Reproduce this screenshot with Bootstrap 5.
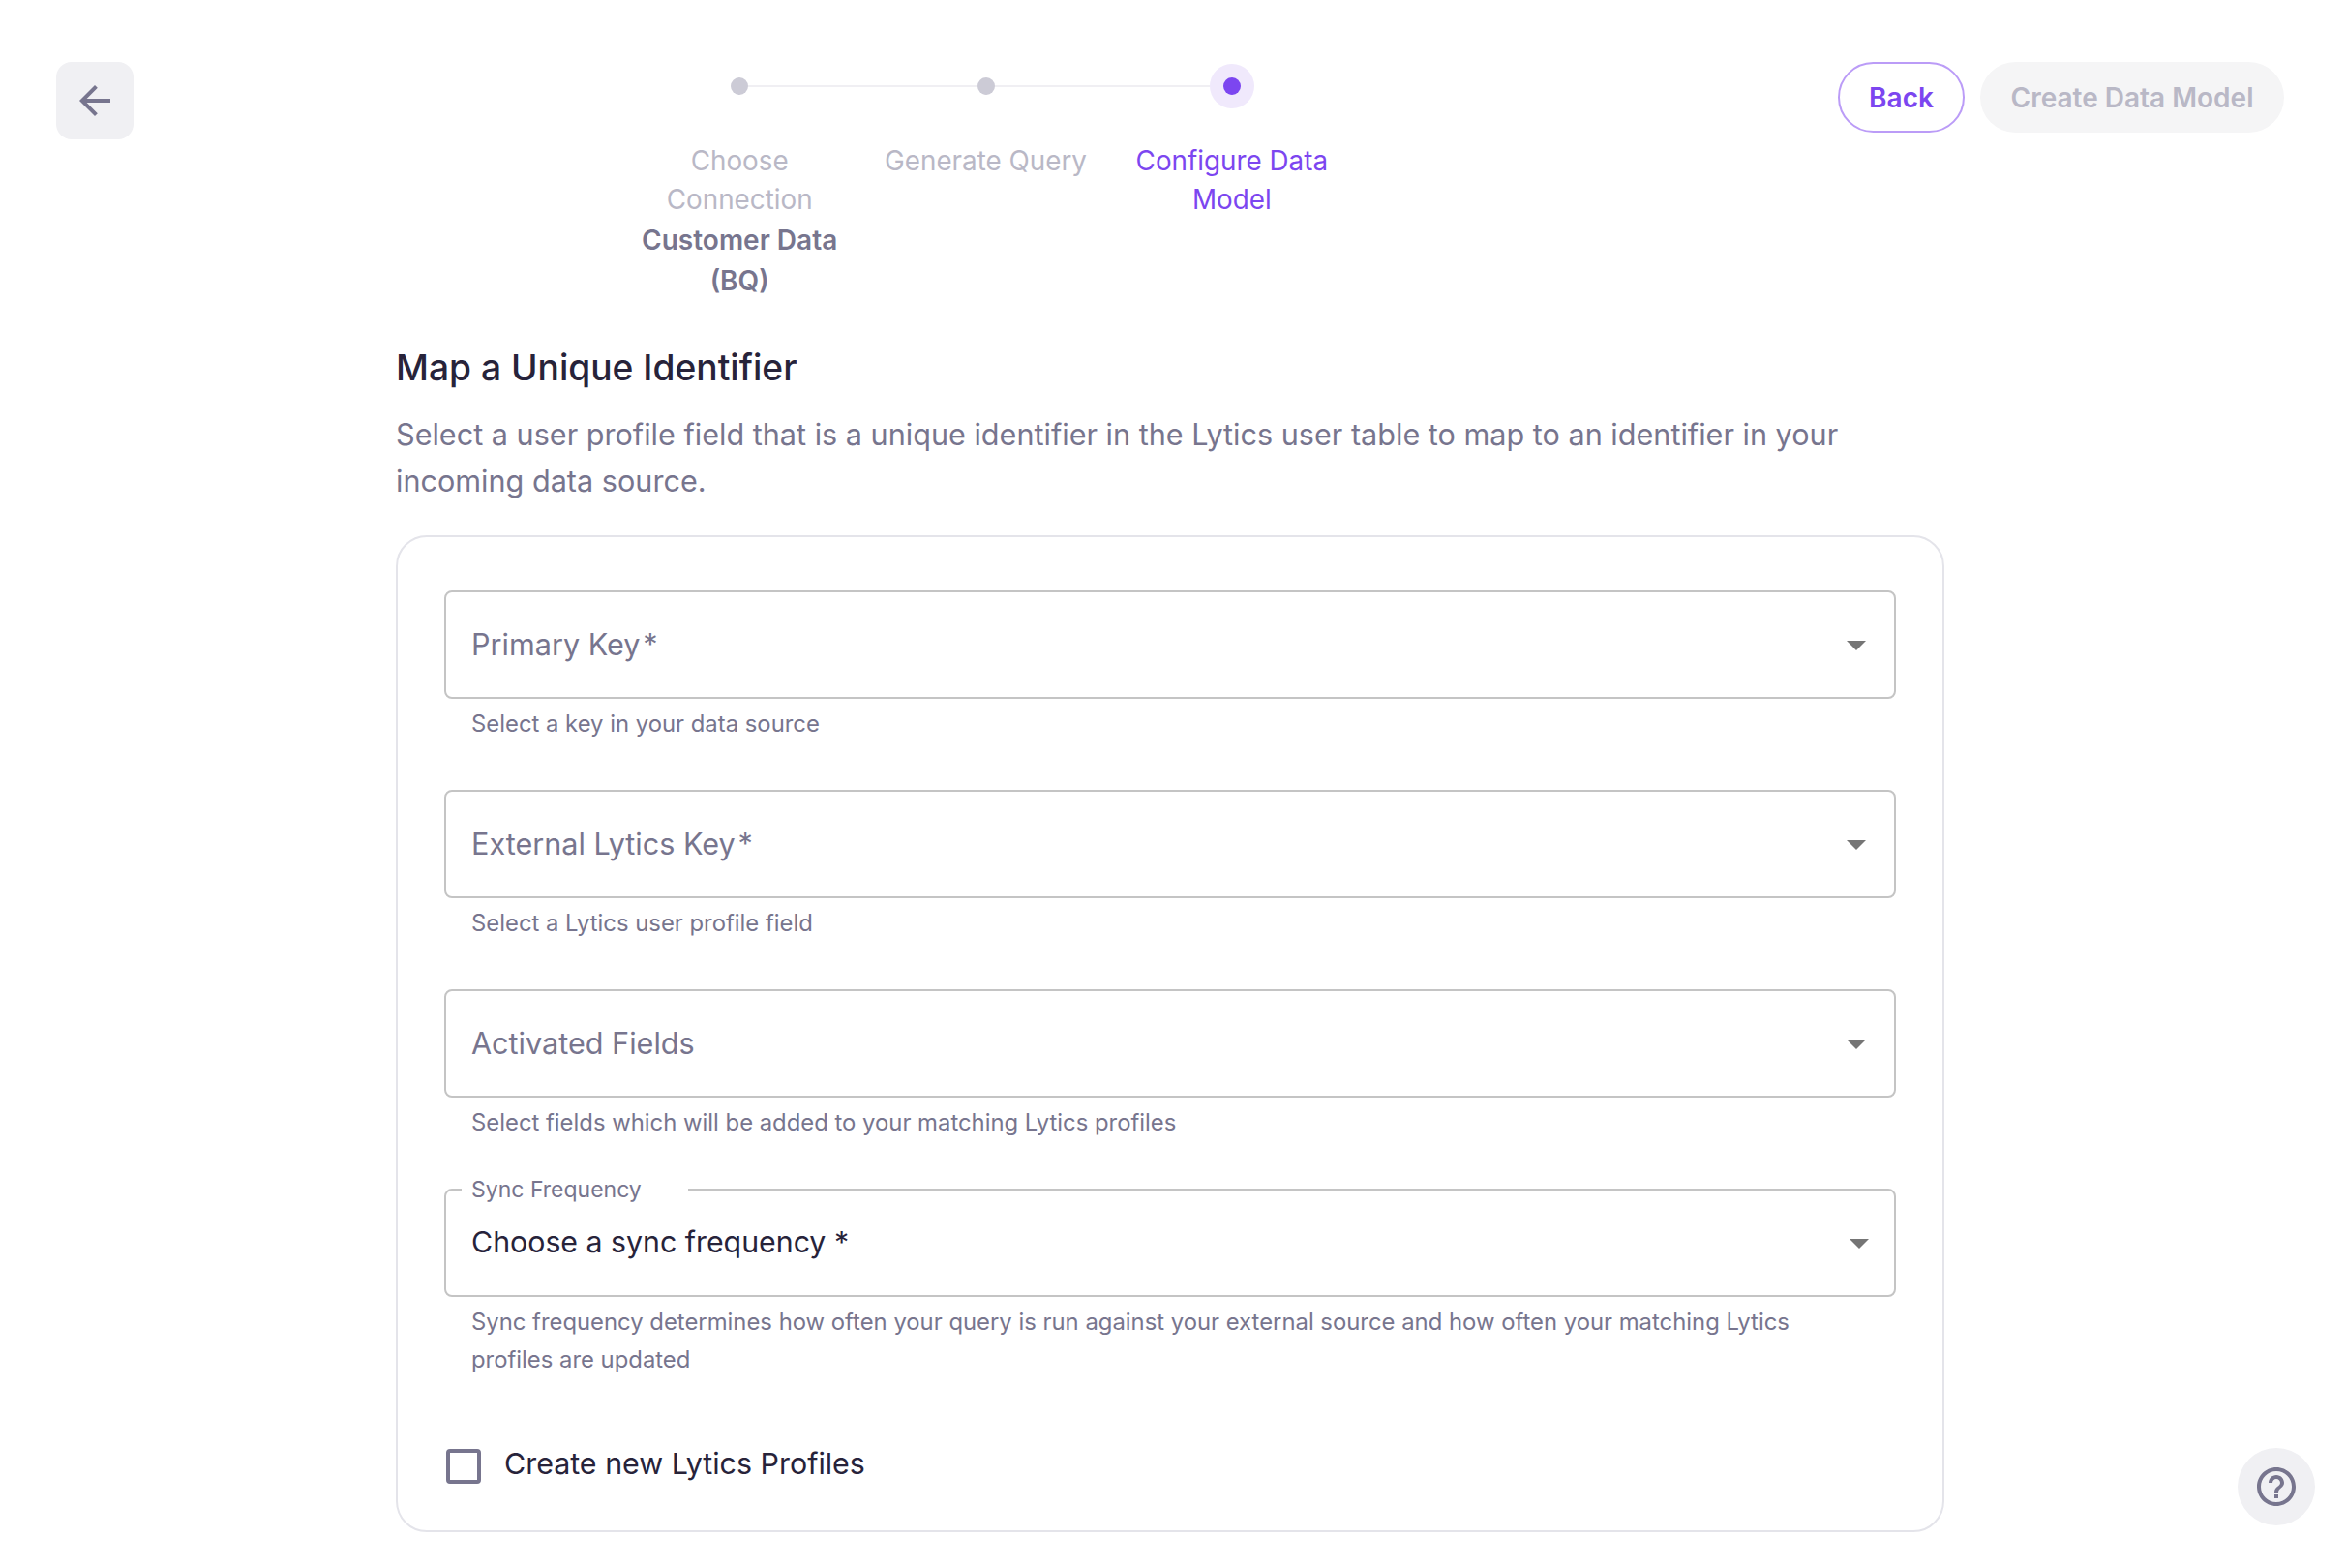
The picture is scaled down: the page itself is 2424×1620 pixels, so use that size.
<!DOCTYPE html>
<html lang="en">
<head>
<meta charset="utf-8">
<title>Map a Unique Identifier</title>
<link rel="stylesheet" href="https://cdn.jsdelivr.net/npm/bootstrap@5.3.0/dist/css/bootstrap.min.css">
<style>
html, body { height: 100%; }
body { font-family: Inter, "Liberation Sans", sans-serif; color: #27233a; background: #fff; overflow: hidden; }
.page-shell { padding: 0 64px 0 58px; }
.back-square { width: 80px; height: 80px; margin-top: 64px; border: 0; border-radius: 16px; background: #f0f0f3; color: #77758e; }
.back-square svg { width: 48px; height: 48px; fill: currentColor; }
.stepper-wrap { width: 763px; margin-left: 499px; padding-top: 66px; }
.step-col { width: 254.5px; }
.step-track { height: 46px; }
.track-seg { flex: 1 1 0; height: 2px; background: #f0eff3; }
.track-seg.blank { background: transparent; }
.step-dot { width: 18px; height: 18px; border-radius: 50%; background: #cccbd6; }
.step-halo { width: 46px; height: 46px; border-radius: 50%; background: #f0e9fc; }
.step-halo i { display: block; width: 18px; height: 18px; border-radius: 50%; background: #7c46f0; }
.step-label { margin-top: 33.5px; padding: 0 16px; font-size: 27.8px; line-height: 40px; text-align: center; color: #b9b8c6; }
.step-label.current { color: #7c46f0; }
.step-note { margin-top: 1px; font-size: 28px; font-weight: 600; line-height: 42px; color: #77758e; }
.top-actions { margin-top: 64px; gap: 16px; }
.pill-back, .pill-create { height: 73px; font-size: 28px; font-weight: 600; line-height: 40px; }
.pill-back { width: 131px; padding: 1px 0 0; background: #fff; border: 2px solid #bb9cf7; color: #7c46f0; }
.pill-create.btn:disabled { width: 314px; padding: 1px 0 0; background: #f5f5f6; border: 0; color: #b9b8c6; opacity: 1; }
.main-col { width: 1600px; margin-left: 409px; }
.main-heading { margin: 41.5px 0 0; font-size: 37.2px; line-height: 56px; font-weight: 500; color: #27233a; }
.main-desc { margin: 17px 0 0; font-size: 30.6px; line-height: 48px; color: #77758e; }
.form-panel { height: 1030px; margin-top: 31.5px; padding: 55px 48px 0; border: 2px solid #e4e4ea; border-radius: 32px; }
.select-box { height: 112px; padding: 0 15px 0 26px; border: 2px solid #c4c4c4; border-radius: 8px; font-size: 30.6px; color: #77758e; }
.select-box svg, .select-frame svg { width: 48px; height: 48px; fill: #757575; flex: none; }
.helper-line { margin: 6px 0 48px; padding-left: 28px; padding-right: 28px; font-size: 23.85px; line-height: 40px; color: #77758e; }
.select-frame { min-width: 0; height: 123px; margin: -11px 0 0; padding: 0 12px 0 26px; border: 2px solid #c4c4c4; border-radius: 8px; font-size: 30.3px; color: #27233a; }
.select-frame legend { float: none; width: 234px; margin: 0 0 0 -10px; padding: 0 10px; font-size: 23px; line-height: 24px; color: #77758e; }
.frame-inner { height: 97px; padding-bottom: 10px; }
.helper-line.tight { margin-bottom: 0; line-height: 39px; }
.check-row { margin-top: 64px; padding: 0; min-height: 48px; font-size: 30.4px; line-height: 48px; gap: 24px; padding-left: 2px; }
.check-row .form-check-input { float: none; width: 36px; height: 36px; margin: 6px 0 0; border: 4px solid #77758e; border-radius: 4px; }
.check-row .form-check-label { color: #27233a; }
.help-round { right: 32px; bottom: 44px; width: 80px; height: 80px; border: 0; background: #f0f0f3; color: #77758e; }
.help-round svg { width: 48px; height: 48px; fill: currentColor; }
</style>
</head>
<body>
<div class="page-shell">
  <header class="d-flex align-items-start">
    <button class="back-square d-flex align-items-center justify-content-center p-0 flex-none" type="button" aria-label="Go back">
      <svg viewBox="0 0 24 24"><path d="M20 11H7.83l5.59-5.59L12 4l-8 8 8 8 1.41-1.41L7.83 13H20v-2z"/></svg>
    </button>
    <div class="stepper-wrap d-flex">
      <div class="step-col">
        <div class="step-track d-flex align-items-center"><span class="track-seg blank"></span><span class="step-dot"></span><span class="track-seg"></span></div>
        <div class="step-label">Choose Connection<div class="step-note">Customer Data (BQ)</div></div>
      </div>
      <div class="step-col">
        <div class="step-track d-flex align-items-center"><span class="track-seg"></span><span class="step-dot"></span><span class="track-seg"></span></div>
        <div class="step-label">Generate Query</div>
      </div>
      <div class="step-col">
        <div class="step-track d-flex align-items-center"><span class="track-seg"></span><span class="step-halo d-flex align-items-center justify-content-center"><i></i></span><span class="track-seg blank"></span></div>
        <div class="step-label current">Configure Data Model</div>
      </div>
    </div>
    <div class="top-actions d-flex ms-auto">
      <button class="btn rounded-pill pill-back" type="button">Back</button>
      <button class="btn rounded-pill pill-create" type="button" disabled>Create Data Model</button>
    </div>
  </header>
</div>
<main class="main-col">
  <h1 class="main-heading">Map a Unique Identifier</h1>
  <p class="main-desc">Select a user profile field that is a unique identifier in the Lytics user table to map to an identifier in your incoming data source.</p>
  <section class="form-panel">
    <div class="select-box d-flex align-items-center justify-content-between"><span>Primary Key&#8202;*</span><svg viewBox="0 0 24 24"><path d="M7 10l5 5 5-5z"/></svg></div>
    <p class="helper-line">Select a key in your data source</p>
    <div class="select-box d-flex align-items-center justify-content-between"><span>External Lytics Key&#8202;*</span><svg viewBox="0 0 24 24"><path d="M7 10l5 5 5-5z"/></svg></div>
    <p class="helper-line">Select a Lytics user profile field</p>
    <div class="select-box d-flex align-items-center justify-content-between"><span>Activated Fields</span><svg viewBox="0 0 24 24"><path d="M7 10l5 5 5-5z"/></svg></div>
    <p class="helper-line">Select fields which will be added to your matching Lytics profiles</p>
    <fieldset class="select-frame">
      <legend>Sync Frequency</legend>
      <div class="frame-inner d-flex align-items-center justify-content-between"><span>Choose a sync frequency *</span><svg viewBox="0 0 24 24"><path d="M7 10l5 5 5-5z"/></svg></div>
    </fieldset>
    <p class="helper-line tight">Sync frequency determines how often your query is run against your external source and how often your matching Lytics profiles are updated</p>
    <div class="form-check check-row d-flex align-items-center">
      <input class="form-check-input" type="checkbox" id="createProfiles">
      <label class="form-check-label" for="createProfiles">Create new Lytics Profiles</label>
    </div>
  </section>
</main>
<button class="help-round position-fixed rounded-circle d-flex align-items-center justify-content-center p-0" type="button" aria-label="Help">
  <svg viewBox="0 0 24 24"><path d="M11 18h2v-2h-2v2zm1-16C6.48 2 2 6.48 2 12s4.48 10 10 10 10-4.48 10-10S17.52 2 12 2zm0 18c-4.41 0-8-3.59-8-8s3.59-8 8-8 8 3.59 8 8-3.59 8-8 8zm0-14c-2.21 0-4 1.79-4 4h2c0-1.1.9-2 2-2s2 .9 2 2c0 2-3 1.75-3 5h2c0-2.25 3-2.5 3-5 0-2.21-1.79-4-4-4z"/></svg>
</button>
<script src="https://cdn.jsdelivr.net/npm/bootstrap@5.3.0/dist/js/bootstrap.bundle.min.js"></script>
</body>
</html>
